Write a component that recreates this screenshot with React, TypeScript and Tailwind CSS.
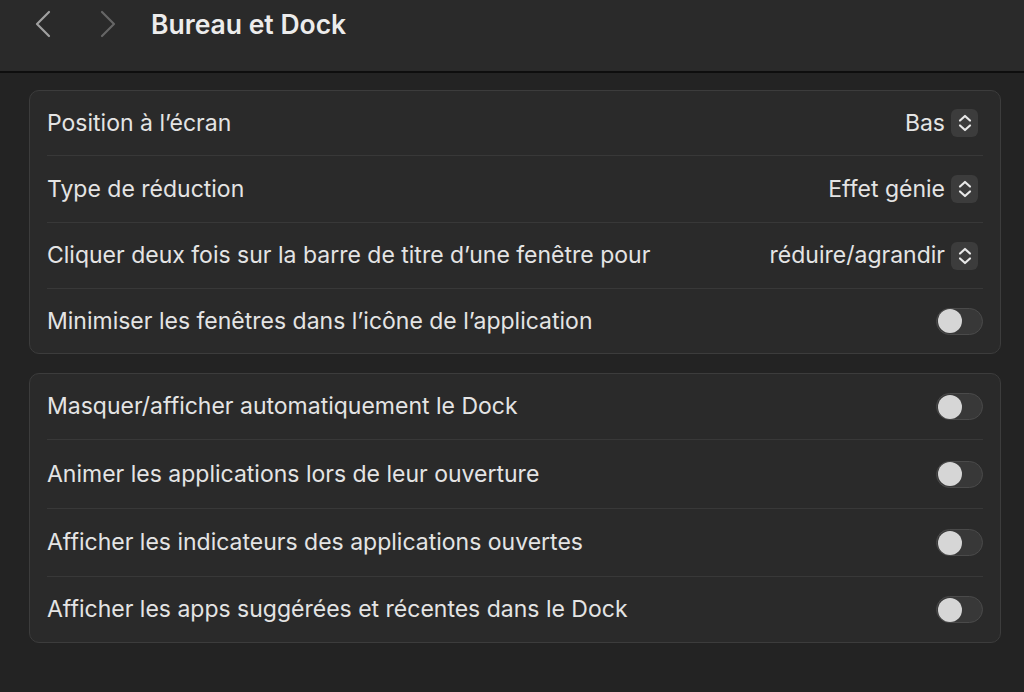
import { ReactNode } from 'react';

const font = { fontFamily: '"Inter", "Liberation Sans", sans-serif' };

function Stepper() {
    return (
        <div className="w-[27px] h-[28px] rounded-[6px] bg-[#3c3c3c] flex items-center justify-center">
            <svg width="16" height="22" viewBox="0 0 16 22" fill="none" stroke="#e8e8e8" strokeWidth="2.2" strokeLinecap="round" strokeLinejoin="round">
                <path d="M3 8.5 L8 4 L13 8.5" />
                <path d="M3 13.5 L8 18 L13 13.5" />
            </svg>
        </div>
    );
}

function Toggle() {
    return (
        <div className="w-[47px] h-[27px] rounded-full bg-[#383838] border border-[#4a4a4a] flex items-center px-[1px]">
            <div className="w-[24px] h-[24px] rounded-full bg-[#d6d6d6]" />
        </div>
    );
}

function Row({ label, children, last, h }: { label: string; children: ReactNode; last?: boolean; h: string }) {
    return (
        <div className={`flex items-center justify-between ${h} ${last ? '' : 'border-b border-[#383838]'}`}>
            <span className="text-[23px] text-[#e4e4e4]">{label}</span>
            {children}
        </div>
    );
}

function Select({ value }: { value: string }) {
    return (
        <div className="flex items-center gap-[6px] mr-[5px]">
            <span className="text-[23px] text-[#e4e4e4]">{value}</span>
            <Stepper />
        </div>
    );
}

export default function App() {
    return (
        <div style={font} className="w-[1024px] h-[692px] bg-[#232323] overflow-hidden flex flex-col">
            <div className="h-[73px] bg-[#2a2a2a] border-b-2 border-[#0e0e0e] shrink-0">
                <div className="flex items-center pl-[35px] pt-[9px]">
                    <svg width="16" height="30" viewBox="0 0 16 30" fill="none" stroke="#a0a0a0" strokeWidth="2.2" strokeLinecap="round" strokeLinejoin="round">
                        <path d="M14 3 L2 15 L14 27" />
                    </svg>
                    <svg width="16" height="30" viewBox="0 0 16 30" fill="none" stroke="#666666" strokeWidth="2.2" strokeLinecap="round" strokeLinejoin="round" className="ml-[49px]">
                        <path d="M2 3 L14 15 L2 27" />
                    </svg>
                    <h1 className="text-[26.5px] font-semibold text-[#ececec] ml-[35px] leading-[30px]">Bureau et Dock</h1>
                </div>
            </div>
            <div className="pl-[29px] pr-[23px] pt-[17px] flex flex-col gap-[19px]">
                <div className="rounded-[10px] bg-[#2a2a2a] border border-[#3c3c3c] px-[17px]">
                    <Row label="Position à l’écran" h="h-[65px]">
                        <Select value="Bas" />
                    </Row>
                    <Row label="Type de réduction" h="h-[67px]">
                        <Select value="Effet génie" />
                    </Row>
                    <Row label="Cliquer deux fois sur la barre de titre d’une fenêtre pour" h="h-[66px]">
                        <Select value="réduire/agrandir" />
                    </Row>
                    <Row label="Minimiser les fenêtres dans l’icône de l’application" h="h-[64px]" last>
                        <Toggle />
                    </Row>
                </div>
                <div className="rounded-[10px] bg-[#2a2a2a] border border-[#3c3c3c] px-[17px]">
                    <Row label="Masquer/afficher automatiquement le Dock" h="h-[66px]">
                        <Toggle />
                    </Row>
                    <Row label="Animer les applications lors de leur ouverture" h="h-[69px]">
                        <Toggle />
                    </Row>
                    <Row label="Afficher les indicateurs des applications ouvertes" h="h-[68px]">
                        <Toggle />
                    </Row>
                    <Row label="Afficher les apps suggérées et récentes dans le Dock" h="h-[65px]" last>
                        <Toggle />
                    </Row>
                </div>
            </div>
        </div>
    );
}
